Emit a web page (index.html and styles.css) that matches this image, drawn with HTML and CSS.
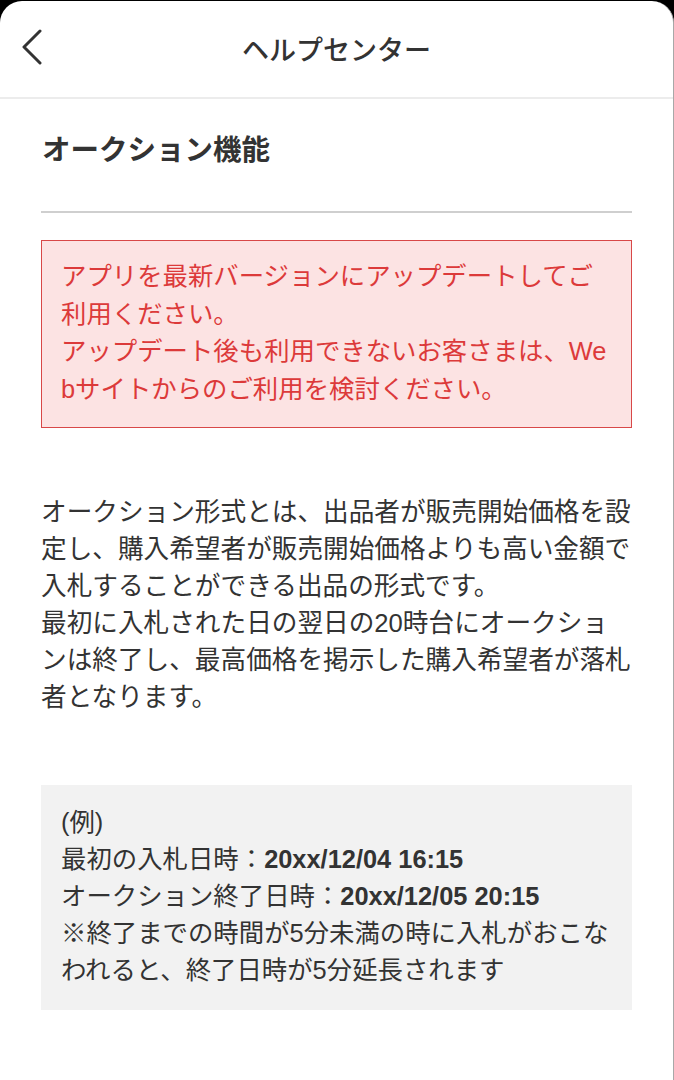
FILE: index.html
```html
<!DOCTYPE html>
<html lang="ja">
<head>
<meta charset="utf-8">
<title>ヘルプセンター</title>
<link rel="stylesheet" href="styles.css">
</head>
<body>
<div class="sheet">
  <header class="nav">
    <button class="back" aria-label="戻る">
      <svg width="24" height="36" viewBox="0 0 24 36"><path d="M20 2 L4 18 L20 34" fill="none" stroke="#333" stroke-width="3" stroke-linecap="round" stroke-linejoin="round"/></svg>
    </button>
    <h1 class="nav-title">ヘルプセンター</h1>
  </header>
  <main class="content">
    <h2 class="page-title">オークション機能</h2>
    <hr class="rule">
    <div class="alert">アプリを最新バージョンにアップデートしてご利用ください。<br>アップデート後も利用できないお客さまは、Webサイトからのご利用を検討ください。</div>
    <p class="body">オークション形式とは、出品者が販売開始価格を設定し、購入希望者が販売開始価格よりも高い金額で入札することができる出品の形式です。<br>最初に入札された日の翌日の20時台にオークションは終了し、最高価格を掲示した購入希望者が落札者となります。</p>
    <div class="example">(例)<br>最初の入札日時：<b>20xx/12/04 16:15</b><br>オークション終了日時：<b>20xx/12/05 20:15</b><br>※終了までの時間が5分未満の時に入札がおこなわれると、終了日時が5分延長されます</div>
  </main>
</div>
</body>
</html>
```

FILE: styles.css
```css
html, body {
  margin: 0;
  padding: 0;
  background: #000;
}
body {
  font-family: "Liberation Sans", "Noto Sans CJK JP", sans-serif;
  color: #333;
}
.sheet {
  background: #fff;
  border-radius: 22px 22px 0 0;
  border-right: 1px solid #a8a8a8;
  min-height: 1080px;
  box-sizing: border-box;
  margin-top: 1px;
}
.nav {
  height: 96px;
  border-bottom: 2px solid #ececec;
  display: flex;
  align-items: center;
  justify-content: center;
  position: relative;
}
.back {
  position: absolute;
  left: 20px;
  top: 28px;
  background: none;
  border: 0;
  padding: 0;
  width: 24px;
  height: 36px;
}
.back svg { display: block; }
.nav-title {
  margin: 0;
  font-size: 27px;
  font-weight: 500;
  color: #333;
  padding-bottom: 2px;
}
.content {
  padding: 0 41px 0 41px;
}
.page-title {
  margin: 0;
  padding-top: 32px;
  font-size: 28.5px;
  font-weight: 700;
  line-height: 38px;
  color: #333;
  padding-left: 1px;
}
.rule {
  margin: 42px 0 0 0;
  border: 0;
  border-top: 2px solid #cfcfcf;
  height: 0;
}
.alert {
  margin-top: 27px;
  border: 1.5px solid #d84848;
  background: #fce3e3;
  color: #dc3a3a;
  padding: 17px 20px 18px 19px;
  font-size: 25.4px;
  line-height: 37.7px;
  word-break: break-all;
}
.body {
  margin: 66px 0 0 0;
  font-size: 25.65px;
  line-height: 37px;
  word-break: break-all;
}
.example {
  margin-top: 69px;
  background: #f2f2f2;
  padding: 19px 20px 21px 20px;
  font-size: 25.4px;
  line-height: 37px;
  word-break: break-all;
}
.example b {
  font-weight: 700;
}
```
